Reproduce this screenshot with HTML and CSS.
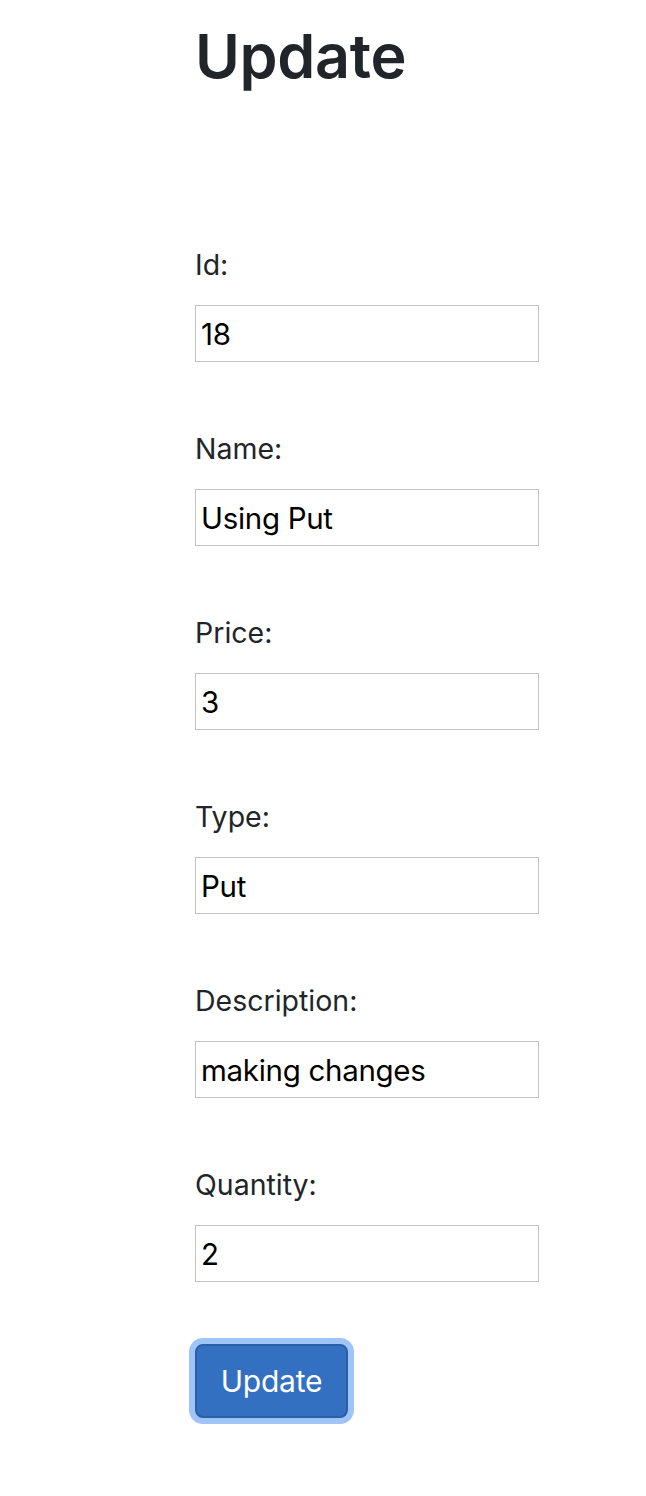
FILE: index.html
```html
<!DOCTYPE html>
<html>
<head>
<meta charset="utf-8">
<link rel="stylesheet" href="styles.css">
</head>
<body>
<div class="page">
  <h1 class="title">Update</h1>
  <form class="form">
    <div class="field">
      <label class="label">Id:</label>
      <input class="input" type="text" value="18">
    </div>
    <div class="field">
      <label class="label">Name:</label>
      <input class="input" type="text" value="Using Put">
    </div>
    <div class="field">
      <label class="label">Price:</label>
      <input class="input" type="text" value="3">
    </div>
    <div class="field">
      <label class="label">Type:</label>
      <input class="input" type="text" value="Put">
    </div>
    <div class="field">
      <label class="label">Description:</label>
      <input class="input" type="text" value="making changes">
    </div>
    <div class="field">
      <label class="label">Quantity:</label>
      <input class="input" type="text" value="2">
    </div>
    <button class="btn" type="button">Update</button>
  </form>
</div>
</body>
</html>
```

FILE: styles.css
```css
html, body {
  margin: 0;
  padding: 0;
  background: #ffffff;
}
.page {
  padding-left: 195px;
  padding-bottom: 40px;
  font-family: Inter, "Liberation Sans", sans-serif;
  color: #212529;
}
.title {
  margin: 0;
  padding-top: 16px;
  font-size: 61px;
  font-weight: 600;
  line-height: 80px;
  letter-spacing: -0.3px;
}
.form {
  margin-top: 152px;
  display: flex;
  flex-direction: column;
  align-items: flex-start;
}
.field {
  display: flex;
  flex-direction: column;
  align-items: flex-start;
}
.label {
  font-size: 28.5px;
  line-height: 34px;
  margin-bottom: 23px;
  letter-spacing: 0;
}
.input {
  box-sizing: border-box;
  width: 344px;
  height: 57px;
  margin: 0 0 70px 0;
  padding: 0 5px;
  border: 1px solid #c4c4c4;
  border-radius: 0;
  font-family: Inter, "Liberation Sans", sans-serif;
  font-size: 29.5px;
  color: #000;
  letter-spacing: -0.3px;
  outline: none;
}
.btn {
  margin: -8px 0 0 0;
  box-sizing: border-box;
  width: 153px;
  height: 74px;
  background: #3470c2;
  border: 2px solid #2a5ea6;
  border-radius: 8px;
  color: #ffffff;
  font-family: Inter, "Liberation Sans", sans-serif;
  font-size: 30px;
  letter-spacing: -0.2px;
  box-shadow: 0 0 0 6px #9fc5f8;
  padding: 0;
}
```
